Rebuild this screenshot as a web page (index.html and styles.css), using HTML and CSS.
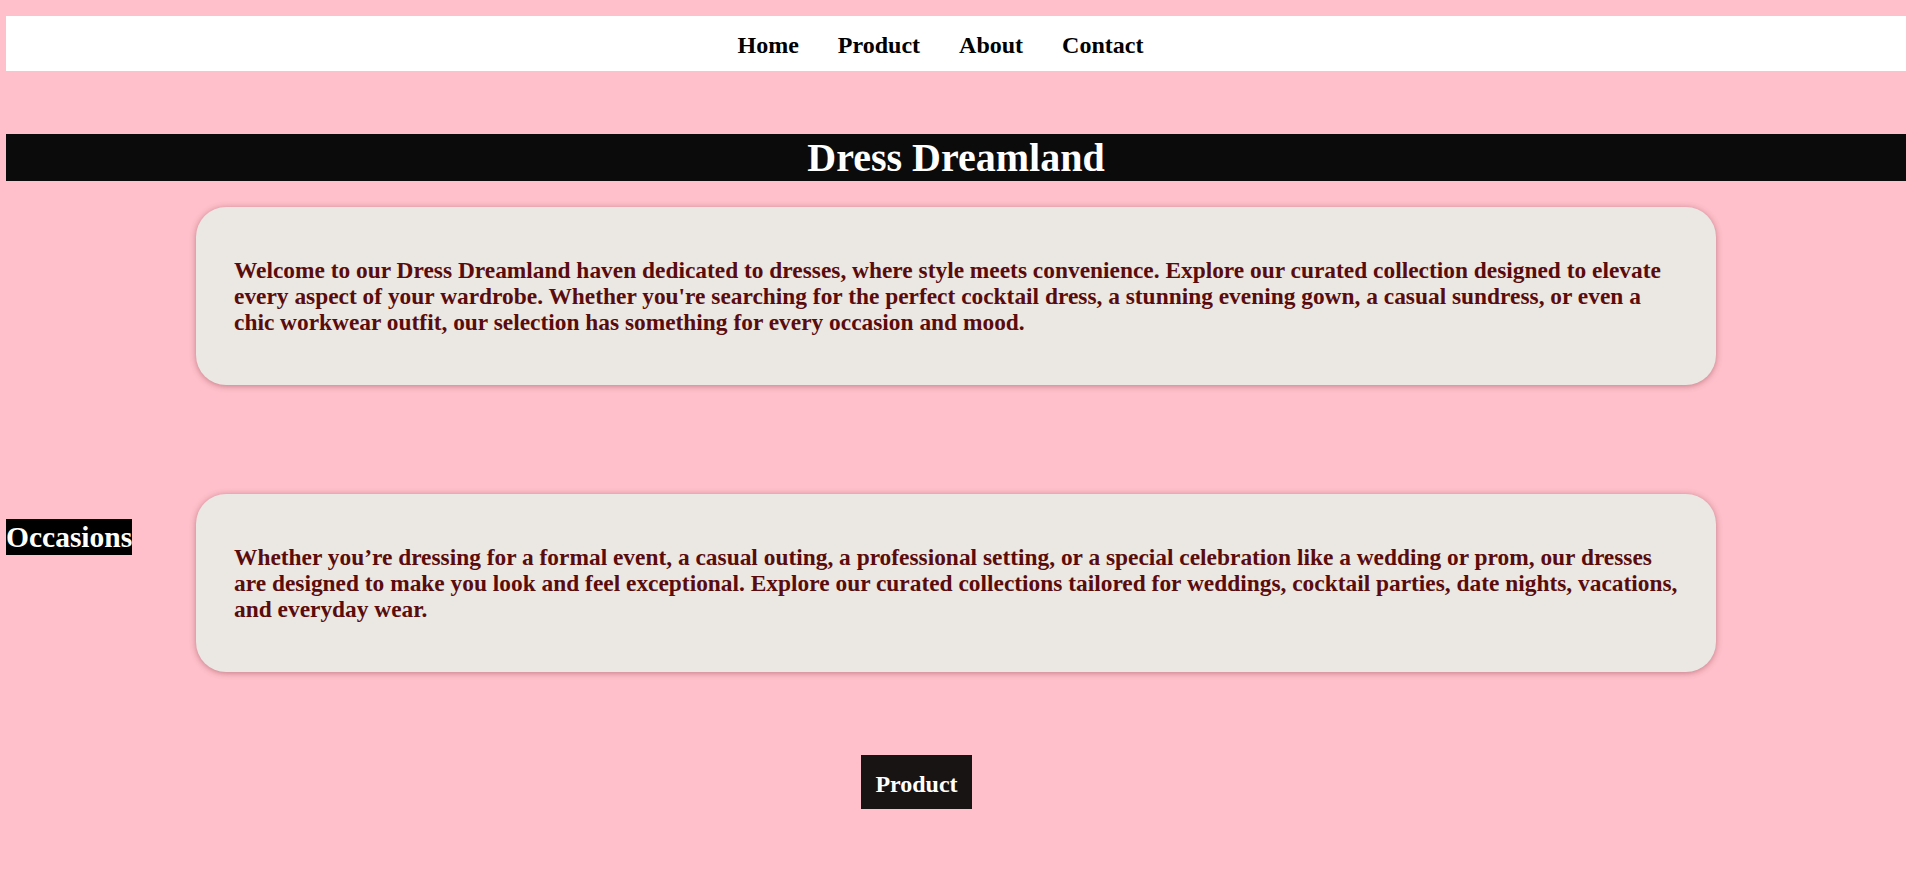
FILE: index.html
```html
<!DOCTYPE html>
<html lang="en">
<head>
<meta charset="utf-8">
<title>Dress Dreamland</title>
<link rel="stylesheet" href="styles.css">
</head>
<body>
  <nav class="nav">
    <a href="#" class="nav-link">Home</a>
    <a href="#" class="nav-link">Product</a>
    <a href="#" class="nav-link">About</a>
    <a href="#" class="nav-link">Contact</a>
  </nav>

  <h1 class="title">Dress Dreamland</h1>

  <section class="row">
    <div class="row-side"></div>
    <div class="card">
      <p class="card-text">Welcome to our Dress Dreamland haven dedicated to dresses, where style meets convenience. Explore our curated collection designed to elevate every aspect of your wardrobe. Whether you're searching for the perfect cocktail dress, a stunning evening gown, a casual sundress, or even a chic workwear outfit, our selection has something for every occasion and mood.</p>
    </div>
    <div class="row-side"></div>
  </section>

  <section class="row row-occasions">
    <div class="row-side"><h2 class="occasions">Occasions</h2></div>
    <div class="card">
      <p class="card-text">Whether you’re dressing for a formal event, a casual outing, a professional setting, or a special celebration like a wedding or prom, our dresses are designed to make you look and feel exceptional. Explore our curated collections tailored for weddings, cocktail parties, date nights, vacations, and everyday wear.</p>
    </div>
    <div class="row-side"></div>
  </section>

  <div class="cta">
    <a href="#" class="cta-button">Product</a>
  </div>
</body>
</html>
```

FILE: styles.css
```css
html, body {
  margin: 0;
  background: #ffc0cb;
}

body {
  padding: 16px 9px 40px 6px;
  font-family: "Liberation Serif", "Times New Roman", serif;
  font-weight: bold;
}

.nav {
  display: flex;
  justify-content: center;
  gap: 39px;
  background: #ffffff;
  padding: 16px 31px 12px 0;
}

.nav-link {
  font-size: 24px;
  line-height: 27px;
  color: #000000;
  text-decoration: none;
}

.title {
  margin: 63px 0 0;
  background: #0b0b0b;
  color: #ffffff;
  text-align: center;
  font-size: 40px;
  line-height: 47px;
  font-weight: bold;
}

.row {
  display: grid;
  grid-template-columns: 190px 1520px 190px;
  margin-top: 26px;
}

.row-occasions {
  margin-top: 109px;
}

.card {
  background: #ebe7e2;
  border-radius: 30px;
  padding: 50px 38px;
  box-shadow: 0 1px 6px rgba(120, 40, 50, 0.45);
}

.card-text {
  margin: 0;
  color: #5a0c0c;
  font-size: 23.4px;
  line-height: 26px;
}

.occasions {
  display: inline-block;
  margin: 25px 0 0;
  background: #000000;
  color: #ffffff;
  font-size: 29.5px;
  line-height: 36px;
  font-weight: bold;
}

.cta {
  display: flex;
  justify-content: center;
  margin-top: 83px;
  padding-right: 79px;
}

.cta-button {
  background: #171413;
  color: #ffffff;
  text-decoration: none;
  font-size: 24px;
  line-height: 27px;
  padding: 16px 14px 11px;
}
```
